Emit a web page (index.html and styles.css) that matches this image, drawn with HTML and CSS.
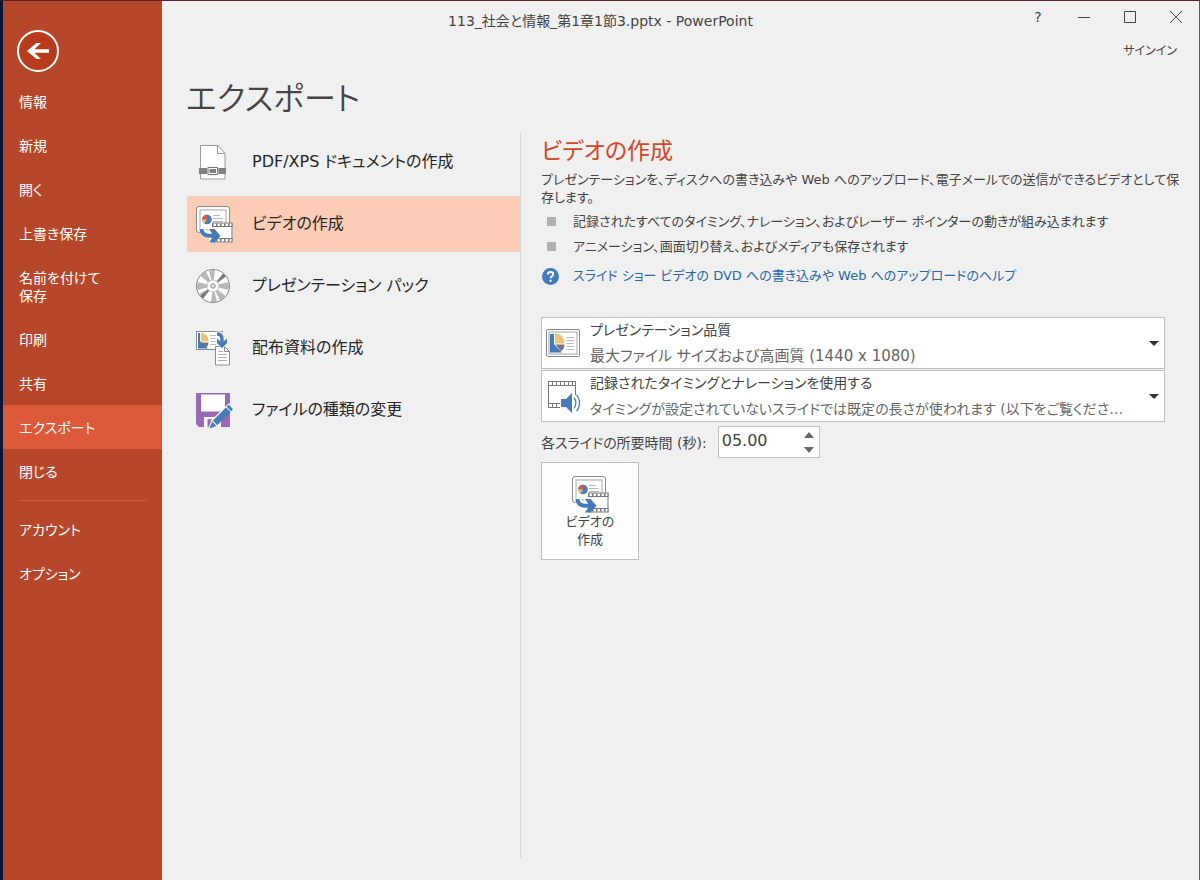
FILE: index.html
```html
<!DOCTYPE html>
<html lang="ja">
<head>
<meta charset="utf-8">
<meta name="viewport" content="width=device-width, initial-scale=1">
<title>113_社会と情報_第1章1節3.pptx - PowerPoint</title>
<link rel="stylesheet" href="styles.css">
</head>
<body>
<svg class="defs" aria-hidden="true">
  <symbol id="icon-video" viewBox="0 0 38 38">
    <rect x="1.5" y="1.5" width="33" height="26" rx="2.5" fill="#fff" stroke="#8a8a8a"/>
    <rect x="5" y="5" width="26" height="20" fill="#fff" stroke="#a6a6a6"/>
    <circle cx="12" cy="14.500" r="4.800" fill="#4a80ba"/>
    <path d="M12 14.500V9.700A4.800 4.800 0 0 0 7.200 14.500z" fill="#dd5a36"/>
    <path d="M12 14.500H7.200A4.800 4.800 0 0 0 9.500 18.600z" fill="#edc17c"/>
    <path d="M18 10.500h7M18 13.500h10M18 16.500h10" stroke="#b8b8b8"/>
    <rect x="16" y="17.500" width="21.500" height="20" fill="#fff"/>
    <path d="M17 18h20.500M17 21.500h20.500M17 33.500h20.500M17 37h20.500M37 18v19" stroke="#777" fill="none"/>
    <path d="M17 19.700h20.500M17 35.300h20.500" stroke="#777" stroke-width="2.600" stroke-dasharray="1.500 2.500"/>
    <path d="M4 23.500c0 7 5 9.500 10 9.500v5.500l3 0 8-8-7-8h-6l3 4.500c-3 0-5-1-5-3.500z" fill="#fff"/>
    <path d="M6.500 24c0 5 4 6.800 8.500 6.800h6" stroke="#447cb9" stroke-width="4" fill="none"/>
    <path d="M14 24h5.500l6 6.800-6 6.700H14l4.500-6.700z" fill="#447cb9"/>
  </symbol>
  <symbol id="icon-chart-slide" viewBox="0 0 34 28">
    <rect x=".5" y=".5" width="33" height="27" rx="1.500" fill="#fff" stroke="#8a8a8a"/>
    <rect x="3" y="3" width="28" height="22" fill="#fff" stroke="#a6a6a6"/>
    <path d="M4 5h4v10l8 8.500H4z" fill="#447cb9"/>
    <path d="M9 4.500c6 0 9.500 4 9.500 10H9z" fill="#edc17c"/>
    <path d="M9.500 15.500h9c0 3.500-1.500 5.500-3.500 6.800z" fill="#777"/>
    <path d="M20.500 8.500h8M20.500 11.500h8M20.500 14.500h8M20.500 17.500h8M20.500 20.500h8" stroke="#c0c0c0"/>
  </symbol>
</svg>

<div class="app">
  <nav class="sidebar" aria-label="ファイル">
    <button class="back" type="button" aria-label="戻る">
      <svg viewBox="0 0 42 42"><circle cx="21" cy="21" r="20" fill="#b83b1d" stroke="#fff" stroke-width="2"/><path d="M10 21l9.500-8h4.500l-6.500 6.300H32v3.400H17.500L24 29h-4.500z" fill="#fff"/></svg>
    </button>
    <ul class="menu">
      <li><a class="menu-item" href="#">情報</a></li>
      <li><a class="menu-item" href="#">新規</a></li>
      <li><a class="menu-item" href="#">開く</a></li>
      <li><a class="menu-item" href="#">上書き保存</a></li>
      <li><a class="menu-item" href="#">名前を付けて<br>保存</a></li>
      <li><a class="menu-item" href="#">印刷</a></li>
      <li><a class="menu-item" href="#">共有</a></li>
      <li><a class="menu-item current" href="#" aria-current="page">エクスポート</a></li>
      <li><a class="menu-item" href="#">閉じる</a></li>
    </ul>
    <ul class="menu menu-extra">
      <li><a class="menu-item" href="#">アカウント</a></li>
      <li><a class="menu-item" href="#">オプション</a></li>
    </ul>
  </nav>

  <div class="main">
    <header class="titlebar">
      <span class="doc-title">113_社会と情報_第1章1節3.pptx - PowerPoint</span>
      <div class="window-buttons">
        <button type="button" class="window-button">?</button>
        <button type="button" class="window-button" aria-label="最小化"><svg viewBox="0 0 12 12"><path d="M0 6.500h12"/></svg></button>
        <button type="button" class="window-button" aria-label="最大化"><svg viewBox="0 0 12 12"><path d="M.5.5h11v11H.5z"/></svg></button>
        <button type="button" class="window-button" aria-label="閉じる"><svg viewBox="0 0 12 12"><path d="M0 0l12 12M12 0L0 12"/></svg></button>
      </div>
    </header>
    <div class="account"><a class="signin" href="#">サインイン</a></div>
    <h1 class="page-title">エクスポート</h1>

    <div class="columns">
      <div class="export-list">
        <button type="button" class="export-item">
          <svg class="export-icon" viewBox="0 0 38 38"><path d="M5.500 2.500h17.500l7 8v25.500H5.500z" fill="#fff" stroke="#9a9a9a"/><path d="M22.500 2.500v8H30" fill="none" stroke="#9a9a9a"/><path d="M4 25h27v6H4z" fill="#808080"/><path d="M12 23.500h11.500v9H12z" fill="#e8e8e8"/><path d="M13 24.500h9.500v7H13z" fill="#fff" stroke="#777"/><path d="M14.500 26h6.500v4h-6.500z" fill="#808080"/></svg>
          <span>PDF/XPS ドキュメントの作成</span>
        </button>
        <button type="button" class="export-item selected" aria-pressed="true">
          <svg class="export-icon"><use href="#icon-video"/></svg>
          <span>ビデオの作成</span>
        </button>
        <button type="button" class="export-item">
          <svg class="export-icon" viewBox="0 0 38 38"><circle cx="18" cy="19" r="16.500" fill="#fff" stroke="#8a8a8a"/><path d="M18 19L14 3.500A16 16 0 0 1 20 3zM18 19L5.500 9A16 16 0 0 1 11 4.500zM18 19L2.500 15A16 16 0 0 0 2.500 23zM18 19L8 31.500A16 16 0 0 1 4 27zM18 19L22 34.500A16 16 0 0 1 16 35zM18 19L30.500 29A16 16 0 0 1 25 33.500zM18 19L33.500 15A16 16 0 0 1 33.500 23z" fill="#b8b8b8"/><path d="M18 19L28 6.500A16 16 0 0 1 31 9.500zM18 19L8 31.500A16 16 0 0 1 5.500 28.500z" fill="#777"/><circle cx="18" cy="19" r="6" fill="#fff" stroke="#c4c4c4"/><circle cx="18" cy="19" r="2.200" fill="#eee" stroke="#888"/></svg>
          <span>プレゼンテーション パック</span>
        </button>
        <button type="button" class="export-item">
          <svg class="export-icon" viewBox="0 0 38 38"><rect x="1.500" y="2.500" width="26" height="18" fill="#fff" stroke="#8a8a8a"/><path d="M3 4h2v8l8 7.500H3z" fill="#447cb9"/><path d="M6 4c5 0 7.500 4 7.500 8.500H6z" fill="#edc17c"/><path d="M6 13.500h7.500c0 2-1 4-2.500 5z" fill="#777"/><path d="M15 6.500h6M15 9.500h7M15 12.500h7M15 15.500h6" stroke="#c0c0c0"/><path d="M20.500 17.500h9l5 5V36h-14z" fill="#fff" stroke="#8a8a8a"/><path d="M29.500 17.500v5h5" fill="none" stroke="#8a8a8a"/><path d="M23 22.500h5M23 25.500h9M23 28.500h9M23 31.500h9" stroke="#b0b0b0"/><path d="M20.500 2.500h5c3 1 4.500 3 4.500 6l3.500-.5v6L27 20l-6.500-6V8l3.500 1z" fill="#f0f0f0"/><path d="M22 5c4 0 5 2 5 5.500v5" fill="none" stroke="#447cb9" stroke-width="3.500"/><path d="M22 9.500l5 4.500 5-4.500V14l-5 5-5-5z" fill="#447cb9"/></svg>
          <span>配布資料の作成</span>
        </button>
        <button type="button" class="export-item">
          <svg class="export-icon" viewBox="0 0 38 38"><path d="M1 2h34v34H4l-3-3z" fill="#9969b8"/><path d="M6 3.500h24v17H6zM9 26h17v10H9z" fill="#fff"/><path d="M12.500 28h4v8h-4z" fill="#9969b8"/><path d="M13 38l3.500-9L34 12l4 4.500L21 35z" fill="#f3f3f3"/><path d="M14.500 37.500l2.500-7 4.500 4.500zM17.800 29.700L31 16.500l4.500 4.500-13.200 13.200zM31.800 15.700l2-2 4.200 4.500-2 2z" fill="#447cb9"/></svg>
          <span>ファイルの種類の変更</span>
        </button>
      </div>

      <section class="details" aria-labelledby="details-title">
        <h2 class="details-title" id="details-title">ビデオの作成</h2>
        <p class="lead">プレゼンテーションを、ディスクへの書き込みや Web へのアップロード、電子メールでの送信ができるビデオとして保<br>存します。</p>
        <ul class="points">
          <li>記録されたすべてのタイミング、ナレーション、およびレーザー ポインターの動きが組み込まれます</li>
          <li>アニメーション、画面切り替え、およびメディアも保存されます</li>
        </ul>
        <a class="help" href="#">
          <svg class="help-icon" viewBox="0 0 16 16" aria-hidden="true"><circle cx="8" cy="8" r="8" fill="#447cb9"/><path d="M5.400 6.200C5.400 4.600 6.500 3.700 8 3.700s2.600.9 2.600 2.200c0 1.700-2.500 1.900-2.500 3.700M8.100 11v1.900" fill="none" stroke="#fff" stroke-width="1.800"/></svg>
          <span>スライド ショー ビデオの DVD への書き込みや Web へのアップロードのヘルプ</span>
        </a>

        <div class="form">
          <div class="combo">
            <select class="combo-select" aria-label="ビデオの品質" aria-describedby="quality-note"><option>プレゼンテーション品質</option></select>
            <svg class="combo-icon" aria-hidden="true"><use href="#icon-chart-slide" height="28" y="3"/></svg>
            <span class="combo-note" id="quality-note">最大ファイル サイズおよび高画質 (1440 x 1080)</span>
            <svg class="combo-arrow" viewBox="0 0 10 5" aria-hidden="true"><path d="M0 0h10L5 5z" fill="#333"/></svg>
          </div>
          <div class="combo">
            <select class="combo-select" aria-label="タイミングとナレーション" aria-describedby="timing-note"><option>記録されたタイミングとナレーションを使用する</option></select>
            <svg class="combo-icon" viewBox="0 0 34 34" aria-hidden="true"><path d="M2 2.500h28v26H2z" fill="#fff"/><path d="M2.500 2v27M29.500 2v14M2 6.500h28M2 2.500h28M2 24.500h14M2 28.500h13" fill="none" stroke="#777"/><path d="M2 4.500h28M2 26.500h13" stroke="#777" stroke-width="4" stroke-dasharray="1 3"/><path d="M14 19h5l8-7v24l-8-7h-5z" fill="#fff"/><path d="M15 20h5l6-6v20l-6-6h-5z" fill="#447cb9"/><path d="M28 19c2.500 2.500 2.500 7.500 0 10M30.500 16c4 4 4 12 0 16" fill="none" stroke="#447cb9" stroke-width="1.300"/></svg>
            <span class="combo-note compact" id="timing-note">タイミングが設定されていないスライドでは既定の長さが使われます (以下をご覧くださ…</span>
            <svg class="combo-arrow" viewBox="0 0 10 5" aria-hidden="true"><path d="M0 0h10L5 5z" fill="#333"/></svg>
          </div>
          <div class="duration">
            <label for="seconds">各スライドの所要時間 (秒):</label>
            <div class="spinner">
              <input class="spinner-input" id="seconds" type="text" inputmode="decimal" value="05.00">
              <div class="spinner-buttons">
                <button type="button" class="spinner-button" aria-label="増やす"><svg viewBox="0 0 10 6"><path d="M0 6h10L5 0z"/></svg></button>
                <button type="button" class="spinner-button" aria-label="減らす"><svg viewBox="0 0 10 6"><path d="M0 0h10L5 6z"/></svg></button>
              </div>
            </div>
          </div>
          <button type="button" class="create">
            <svg class="export-icon"><use href="#icon-video"/></svg>
            <span>ビデオの<br>作成</span>
          </button>
        </div>
      </section>
    </div>
  </div>
</div>
</body>
</html>
```
FILE: styles.css
```css
* { box-sizing: border-box; }

body {
  margin: 0;
  font-family: "DejaVu Sans", "Noto Sans CJK JP", sans-serif;
  font-size: 14px;
  font-weight: 400;
  font-feature-settings: "palt";
  color: #444;
  background: #f0f0f0;
}

button, input, select {
  margin: 0;
  padding: 0;
  border: 0;
  background: none;
  color: inherit;
  font: inherit;
  font-feature-settings: inherit;
}

ul {
  margin: 0;
  padding: 0;
  list-style: none;
}

a {
  color: inherit;
  text-decoration: none;
}

svg { display: block; }

.defs {
  position: absolute;
  width: 0;
  height: 0;
}

.app {
  display: flex;
  min-height: 100vh;
  border-top: 1px solid #5f2020;
  border-right: 1px solid #8c4a42;
  border-left: 3px solid #0b1638;
}

.sidebar {
  flex: none;
  width: 159px;
  padding-top: 29px;
  background: #b7472a;
  color: #fff;
}

.back {
  display: block;
  width: 42px;
  height: 42px;
  margin: 0 0 7px 14px;
}

.menu-item {
  display: block;
  padding: 14px 16px 12px;
  line-height: 18px;
}

.current { background: #dc5939; }

.menu-extra::before {
  content: "";
  display: block;
  height: 1px;
  margin: 7px 16px 6px;
  background: #dc5939;
}

.main {
  display: flex;
  flex: 1;
  flex-direction: column;
  min-width: 0;
}

.titlebar {
  display: flex;
  height: 36px;
}

.doc-title {
  flex: 1;
  padding: 9px 0 0 24px;
  line-height: 22px;
  text-align: center;
}

.window-buttons { display: flex; }

.window-button {
  display: grid;
  place-items: center;
  width: 46px;
  height: 32px;
}

.window-button svg {
  width: 12px;
  height: 12px;
  fill: none;
  stroke: #444;
}

.account {
  padding: 4px 22px 0;
  font-size: 12px;
  line-height: 20px;
  text-align: right;
}

.page-title {
  margin: 12px 0 8px 24px;
  font-size: 32px;
  font-weight: 350;
  line-height: 52px;
}

.columns {
  display: flex;
  flex: 1;
  margin: 0 34px 22px 25px;
}

.export-list {
  display: flex;
  flex: none;
  flex-direction: column;
  gap: 6px;
  width: 334px;
  padding-top: 1px;
  border-right: 1px solid #d8d8d8;
}

.export-item {
  display: flex;
  align-items: center;
  gap: 19px;
  height: 56px;
  padding: 0 8px;
  color: #262626;
  font-size: 16px;
  text-align: left;
}

.export-item span { padding-bottom: 4px; }

.selected { background: #fccdb6; }

.export-icon {
  flex: none;
  width: 38px;
  height: 38px;
}

.details {
  flex: 1;
  min-width: 0;
  padding-left: 20px;
}

.details-title {
  margin: 0;
  color: #d24726;
  font-size: 23px;
  font-weight: 400;
  line-height: 36px;
}

.lead {
  margin: 2px 0;
  font-size: 13px;
  line-height: 18px;
  white-space: nowrap;
}

.points li {
  display: flex;
  align-items: center;
  gap: 17px;
  padding-left: 6px;
  font-size: 13px;
  line-height: 25px;
  white-space: nowrap;
}

.points li::before {
  content: "";
  width: 9px;
  height: 9px;
  background: #b1b1b1;
}

.help {
  display: flex;
  align-items: center;
  gap: 14px;
  padding: 6px 1px;
  color: #2b66a5;
  font-size: 13px;
  line-height: 22px;
  white-space: nowrap;
}

.help-icon {
  width: 17px;
  height: 17px;
}

.form {
  display: flex;
  flex-direction: column;
  align-items: flex-start;
  gap: 1px;
  margin-top: 24px;
}

.combo {
  display: grid;
  grid-template: 25px 25px / 48px 1fr 16px;
  align-items: center;
  width: 100%;
  border: 1px solid #c0c0c0;
  background: #fff;
}

.combo-select {
  grid-area: 1 / 1 / 3 / 4;
  width: 100%;
  height: 100%;
  padding: 0 20px 26px 48px;
  appearance: none;
  font-size: 14px;
  line-height: 24px;
}

.combo-icon {
  grid-area: 1 / 1 / 3 / 2;
  width: 34px;
  height: 34px;
  margin-left: 4px;
  pointer-events: none;
}

.combo-note {
  grid-area: 2 / 2 / 3 / 3;
  color: #666;
  font-size: 15px;
  line-height: 24px;
  overflow: hidden;
  pointer-events: none;
  text-overflow: ellipsis;
  white-space: nowrap;
}

.compact { font-size: 14px; }

.combo-arrow {
  grid-area: 1 / 3 / 3 / 4;
  width: 10px;
  height: 5px;
  margin-left: 1px;
  pointer-events: none;
}

.duration {
  display: flex;
  align-items: center;
  gap: 11px;
  padding: 3px 0;
}

.spinner {
  display: flex;
  width: 102px;
  height: 32px;
  border: 1px solid #c0c0c0;
  background: #fff;
}

.spinner-input {
  flex: 1;
  min-width: 0;
  padding: 0 0 3px 3px;
  font-size: 16px;
}

.spinner-buttons {
  display: grid;
  width: 15px;
}

.spinner-button {
  display: grid;
  place-items: center start;
}

.spinner-button svg {
  width: 10px;
  height: 6px;
  fill: #666;
}

.create {
  display: flex;
  flex-direction: column;
  align-items: center;
  width: 98px;
  height: 98px;
  padding-top: 12px;
  border: 1px solid #c0c0c0;
  background: #fdfdfd;
  font-size: 13px;
  line-height: 18px;
}
```
